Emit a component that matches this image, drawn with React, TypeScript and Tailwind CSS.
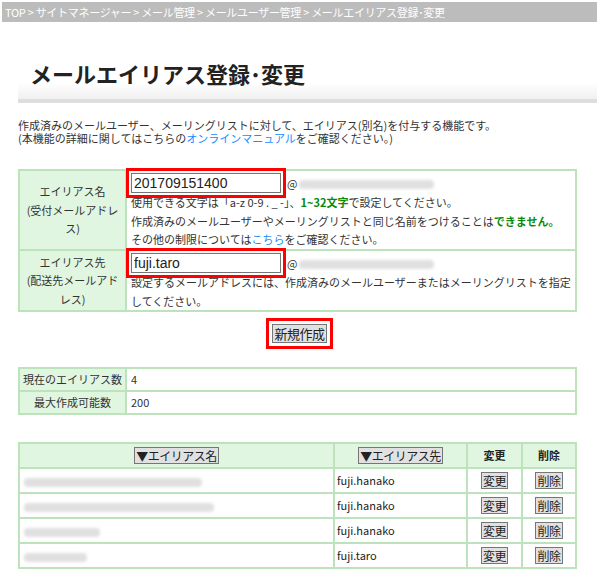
import React from "react";

const jp = { fontFamily: '"Noto Sans CJK JP", "Noto Sans", sans-serif' };

function Blur({ w }: { w: number }) {
  return (
    <span
      className="inline-block h-[9px] rounded-sm bg-[#e0e0e0] blur-[1.5px] align-middle"
      style={{ width: w }}
    />
  );
}

function Marked({ children, pad = 5 }: { children: React.ReactNode; pad?: number }) {
  return (
    <span className="relative inline-block">
      {children}
      <span
        className="pointer-events-none absolute border-[3px] border-[#ff0000]"
        style={{ left: -pad, right: -pad, top: -pad, bottom: -pad }}
      />
    </span>
  );
}

function SmallBtn({ label }: { label: string }) {
  return (
    <button className="border border-[#767676] bg-[#e1e1e1] px-[1px] text-[12px] leading-[15px] tracking-[-0.5px] text-[#222]">
      {label}
    </button>
  );
}

const rows = [
  { w: 178, to: "fuji.hanako" },
  { w: 190, to: "fuji.hanako" },
  { w: 76, to: "fuji.hanako" },
  { w: 63, to: "fuji.taro" },
];

export default function App() {
  return (
    <div className="min-h-[586px] w-[597px] bg-white text-[11px] text-[#333]" style={jp}>
      <div className="pl-[2px] pt-[2px]">
        <div className="h-[20px] bg-[#bcbcbc] pl-[3px] text-[11px] leading-[20px] tracking-[-0.3px] text-white">
          TOP &gt; サイトマネージャー &gt; メール管理 &gt; メールユーザー管理 &gt; メールエイリアス登録･変更
        </div>
      </div>

      <div className="ml-[18px] mt-[36px] border-b-[4px] border-[#dedede] bg-gradient-to-b from-white from-60% to-[#f0f0f0]">
        <h1 className="pl-[12px] pb-[11px] text-[22px] font-bold leading-[30px] text-[#222]">
          メールエイリアス登録･変更
        </h1>
      </div>

      <div className="ml-[18px] mt-[16px] text-[11px] leading-[13px]">
        <p>作成済みのメールユーザー、メーリングリストに対して、エイリアス(別名)を付与する機能です。</p>
        <p>
          (本機能の詳細に関してはこちらの<span className="text-[#1a8cff]">オンラインマニュアル</span>をご確認ください。)
        </p>
      </div>

      <table className="ml-[18px] mt-[24px] w-[559px] border-collapse text-[11px]">
        <tbody>
          <tr className="h-[80px]">
            <td className="w-[107px] border-2 border-[#bde3bd] bg-[#e0f6e0] px-[6px] text-center leading-[18.5px] text-[#333]">
              エイリアス名
              <br />
              (受付メールアドレス)
            </td>
            <td className="border-2 border-[#bde3bd] px-[4px] pt-[2px] align-top leading-[18.5px]">
              <div className="flex h-[20px] items-center">
                <Marked>
                  <input
                    readOnly
                    value="201709151400"
                    className="block h-[20px] w-[150px] border border-[#767676] px-[2px] text-[14px] text-[#222]"
                    style={{ fontFamily: '"Liberation Sans", Arial, sans-serif' }}
                  />
                </Marked>
                <span className="ml-[6px] text-[#333]">@</span>
                <span className="ml-[2px]">
                  <Blur w={135} />
                </span>
              </div>
              <div>
                使用できる文字は「a-z 0-9 . _ -」、<b className="text-[#0a8a0a]">1~32文字</b>で設定してください。
              </div>
              <div>
                作成済みのメールユーザーやメーリングリストと同じ名前をつけることは
                <b className="text-[#0a8a0a]">できません。</b>
              </div>
              <div>
                その他の制限については<span className="text-[#1a8cff]">こちら</span>をご確認ください。
              </div>
            </td>
          </tr>
          <tr className="h-[60px]">
            <td className="border-2 border-[#bde3bd] bg-[#e0f6e0] px-[6px] text-center leading-[18.5px] text-[#333]">
              エイリアス先
              <br />
              (配送先メールアドレス)
            </td>
            <td className="border-2 border-[#bde3bd] px-[4px] pt-[2px] align-top leading-[18.5px]">
              <div className="flex h-[20px] items-center">
                <Marked>
                  <input
                    readOnly
                    value="fuji.taro"
                    className="block h-[20px] w-[150px] border border-[#767676] px-[2px] text-[14px] text-[#222]"
                    style={{ fontFamily: '"Liberation Sans", Arial, sans-serif' }}
                  />
                </Marked>
                <span className="ml-[6px] text-[#333]">@</span>
                <span className="ml-[2px]">
                  <Blur w={135} />
                </span>
              </div>
              <div>
                設定するメールアドレスには、作成済みのメールユーザーまたはメーリングリストを指定してください。
              </div>
            </td>
          </tr>
        </tbody>
      </table>

      <div className="mt-[12px] flex justify-center pl-[2px]">
        <Marked pad={6}>
          <button className="block h-[19px] border border-[#767676] bg-[#e1e1e1] px-[1px] text-[13px] leading-[16px] tracking-[-0.5px] text-[#222]">
            新規作成
          </button>
        </Marked>
      </div>

      <table className="ml-[18px] mt-[24px] w-[559px] border-collapse text-[11px]">
        <tbody>
          <tr className="h-[23px]">
            <td className="w-[107px] whitespace-nowrap border-2 border-[#bde3bd] bg-[#e0f6e0] px-[3px] text-center text-[#333]">
              現在のエイリアス数
            </td>
            <td className="border-2 border-[#bde3bd] px-[4px]">4</td>
          </tr>
          <tr className="h-[23px]">
            <td className="border-2 border-[#bde3bd] bg-[#e0f6e0] px-[3px] text-center text-[#333]">
              最大作成可能数
            </td>
            <td className="border-2 border-[#bde3bd] px-[4px]">200</td>
          </tr>
        </tbody>
      </table>

      <table className="ml-[18px] mt-[27px] w-[559px] border-collapse text-[11px]">
        <thead>
          <tr className="h-[25px] bg-[#e0f6e0]">
            <th className="w-[315px] border-2 border-[#bde3bd] font-normal">
              <SmallBtn label="▼エイリアス名" />
            </th>
            <th className="w-[133px] border-2 border-[#bde3bd] font-normal">
              <SmallBtn label="▼エイリアス先" />
            </th>
            <th className="w-[55px] border-2 border-[#bde3bd] font-bold text-[#222]">変更</th>
            <th className="border-2 border-[#bde3bd] font-bold text-[#222]">削除</th>
          </tr>
        </thead>
        <tbody>
          {rows.map((r, i) => (
            <tr key={i} className="h-[25px]">
              <td className="border-2 border-[#bde3bd] px-[4px]">
                <Blur w={r.w} />
              </td>
              <td className="border-2 border-[#bde3bd] px-[2px] text-[#222]">{r.to}</td>
              <td className="border-2 border-[#bde3bd] text-center">
                <SmallBtn label="変更" />
              </td>
              <td className="border-2 border-[#bde3bd] text-center">
                <SmallBtn label="削除" />
              </td>
            </tr>
          ))}
        </tbody>
      </table>
    </div>
  );
}
